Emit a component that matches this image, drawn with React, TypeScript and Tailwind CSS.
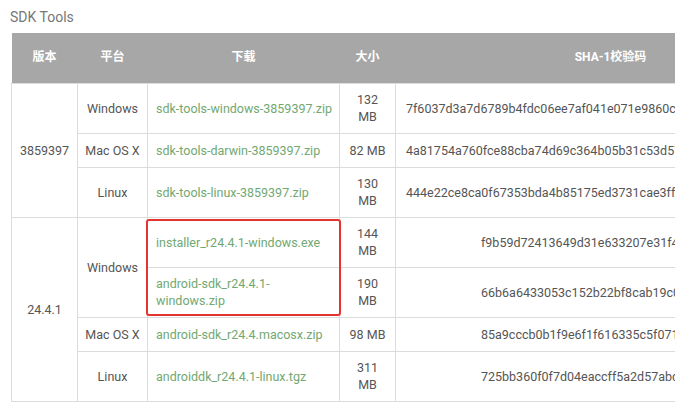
const font = { fontFamily: 'Roboto, "Noto Sans CJK SC", sans-serif' };

type Row = {
  version?: { label: string; span: number };
  platform?: { label: string; span: number };
  file: string[];
  size: string[];
  hash: string;
  tall: boolean;
  hashPad: 'near' | 'far';
};

const rows: Row[] = [
  {
    version: { label: '3859397', span: 3 },
    platform: { label: 'Windows', span: 1 },
    file: ['sdk-tools-windows-3859397.zip'],
    size: ['132', 'MB'],
    hash: '7f6037d3a7d6789b4fdc06ee7af041e071e9860c51f66f7a4eb5913df9871fd2',
    tall: true,
    hashPad: 'near',
  },
  {
    platform: { label: 'Mac OS X', span: 1 },
    file: ['sdk-tools-darwin-3859397.zip'],
    size: ['82 MB'],
    hash: '4a81754a760fce88cba74d69c364b05b31c53d57b26f9f82355c61d5fe4b9df9',
    tall: false,
    hashPad: 'near',
  },
  {
    platform: { label: 'Linux', span: 1 },
    file: ['sdk-tools-linux-3859397.zip'],
    size: ['130', 'MB'],
    hash: '444e22ce8ca0f67353bda4b85175ed3731cae3ffa695ca18119cbacef1c1bea0',
    tall: true,
    hashPad: 'near',
  },
  {
    version: { label: '24.4.1', span: 4 },
    platform: { label: 'Windows', span: 2 },
    file: ['installer_r24.4.1-windows.exe'],
    size: ['144', 'MB'],
    hash: 'f9b59d72413649d31e633207e31f456443e7ea0b',
    tall: true,
    hashPad: 'far',
  },
  {
    file: ['android-sdk_r24.4.1-', 'windows.zip'],
    size: ['190', 'MB'],
    hash: '66b6a6433053c152b22bf8cab19c0f3fef4eba49',
    tall: true,
    hashPad: 'far',
  },
  {
    platform: { label: 'Mac OS X', span: 1 },
    file: ['android-sdk_r24.4.macosx.zip'],
    size: ['98 MB'],
    hash: '85a9cccb0b1f9e6f1f616335c5f07107553840cd',
    tall: false,
    hashPad: 'far',
  },
  {
    platform: { label: 'Linux', span: 1 },
    file: ['androiddk_r24.4.1-linux.tgz'],
    size: ['311', 'MB'],
    hash: '725bb360f0f7d04eaccff5a2d57abdd49061326d',
    tall: true,
    hashPad: 'far',
  },
];

export default function App() {
  return (
    <div className="h-[405px] w-[688px] overflow-hidden bg-white" style={font}>
      <div className="pl-[10px] pt-[8px] text-[14px] leading-[18px] text-[#777]">SDK Tools</div>
      <div className="relative ml-[11px] mt-[7px] w-[664px] overflow-hidden">
        <table className="w-[814px] table-fixed border-collapse text-[12.5px] leading-[17px] text-[#555]">
          <colgroup>
            <col className="w-[66px]" />
            <col className="w-[70px]" />
            <col className="w-[192px]" />
            <col className="w-[56px]" />
            <col className="w-[430px]" />
          </colgroup>
          <thead>
            <tr className="h-[50px] bg-[#a7a7a7] text-[12px] font-bold text-white">
              <th className="text-center">版本</th>
              <th className="text-center">平台</th>
              <th className="text-center">下载</th>
              <th className="text-center">大小</th>
              <th className="text-center">SHA-1校验码</th>
            </tr>
          </thead>
          <tbody>
            {rows.map((row) => (
              <tr key={row.file.join('')} className={row.tall ? 'h-[50px]' : 'h-[34px]'}>
                {row.version && (
                  <td
                    rowSpan={row.version.span}
                    className="border border-[#dcdcdc] text-center align-middle"
                  >
                    {row.version.label}
                  </td>
                )}
                {row.platform && (
                  <td
                    rowSpan={row.platform.span}
                    className="whitespace-nowrap border border-[#dcdcdc] text-center align-middle"
                  >
                    {row.platform.label}
                  </td>
                )}
                <td className="whitespace-nowrap border border-[#dcdcdc] px-[8px] py-[6px] text-[#72a872]">
                  {row.file.map((part, i) => (
                    <div key={i}>{part}</div>
                  ))}
                </td>
                <td className="whitespace-nowrap border border-[#dcdcdc] text-center">
                  {row.size.map((part, i) => (
                    <div key={i}>{part}</div>
                  ))}
                </td>
                <td
                  className={
                    'whitespace-nowrap border border-[#dcdcdc] ' +
                    (row.hashPad === 'near' ? 'pl-[10px]' : 'pl-[85px]')
                  }
                >
                  {row.hash}
                </td>
              </tr>
            ))}
          </tbody>
        </table>
        <div className="absolute left-[135px] top-[186px] h-[97px] w-[195px] rounded-[3px] border-2 border-[#e5332f]" />
      </div>
    </div>
  );
}
